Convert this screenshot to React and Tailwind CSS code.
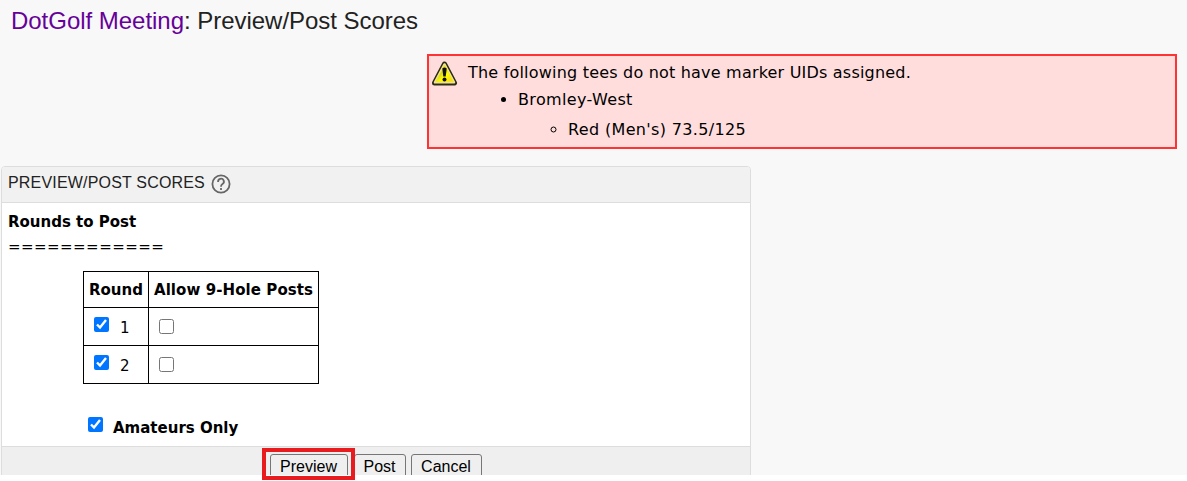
import React, { useState } from 'react';

const WarningIcon = () => (
  <svg className="block h-[26px] w-[26px] shrink-0" viewBox="0 0 26 26" fill="none">
    <defs>
      <linearGradient id="warning-fill" x1="0" y1="0" x2="1" y2="1">
        <stop offset="0" stopColor="#ffffb0" />
        <stop offset="0.4" stopColor="#d4d424" />
        <stop offset="0.6" stopColor="#ffff00" />
        <stop offset="1" stopColor="#f0d020" />
      </linearGradient>
    </defs>
    <path d="M12.5 4 L22.5 23 H2.5 Z" fill="#2c2c14" stroke="#2c2c14" strokeWidth="5" strokeLinejoin="round" />
    <path d="M12.5 4.4 L22 22.4 H3 Z" fill="#f4e4a0" stroke="#f4e4a0" strokeWidth="2.4" strokeLinejoin="round" />
    <path d="M12.5 5 L21.4 21.8 H3.6 Z" fill="url(#warning-fill)" stroke="#f0e820" strokeWidth="0.8" strokeLinejoin="round" />
    <path d="M10.3 8.6 Q12.5 6.2 14.7 8.6 L13.7 16.4 H11.3 Z" fill="#111108" />
    <circle cx="12.5" cy="19.4" r="2" fill="#111108" />
  </svg>
);

const HelpIcon = () => (
  <svg className="mt-[3px] block h-[20px] w-[20px]" viewBox="0 0 20 20" fill="none" stroke="#666" strokeWidth="1.8">
    <circle cx="10" cy="10" r="8.6" />
    <path d="M7.1 8 A2.9 2.9 0 1 1 11.5 10.1 C10.3 10.9 10 11.4 10 12.7" />
    <path d="M10 14.1 V16" />
  </svg>
);

const Checkbox = ({ checked, onChange, label, className }) => (
  <input
    type="checkbox"
    aria-label={label}
    checked={checked}
    onChange={onChange}
    className={`m-0 block h-[15px] w-[15px] shrink-0 ${className || ''}`}
  />
);

const FormButton = ({ children, className }) => (
  <button
    type="button"
    className={`h-[25px] rounded-[3px] border border-[#767676] bg-[#efefef] pr-px text-center font-['Liberation_Sans',Arial,sans-serif] text-[16px] leading-[23px] text-black ${className}`}
  >
    {children}
  </button>
);

const App = () => {
  const [rounds, setRounds] = useState([
    { number: 1, post: true, nineHole: false },
    { number: 2, post: true, nineHole: false },
  ]);
  const [amateursOnly, setAmateursOnly] = useState(true);

  const toggle = (number, field) => {
    setRounds(rounds.map((r) => (r.number === number ? { ...r, [field]: !r[field] } : r)));
  };

  return (
    <div className="relative h-[481px] w-[1187px] overflow-hidden bg-white font-['DejaVu_Sans',Verdana,sans-serif] text-black">
      <main className="flex h-[475px] flex-col overflow-hidden bg-[#f8f8f8]">
        <h1 className="h-[54px] shrink-0 pt-[6px] pl-[11px] font-['Liberation_Sans',Arial,sans-serif] text-[24px] leading-[30px] tracking-[-0.03px] text-[#222]">
          <a href="#meeting" className="text-[#609]">DotGolf Meeting</a>: Preview/Post Scores
        </h1>

        <div className="ml-[427px] flex h-[95px] w-[750px] shrink-0 border-2 border-[#f33] bg-[#fdd] pt-[4px] pl-[3px] text-[16px]">
          <WarningIcon />
          <div className="pl-[10px]">
            <p className="h-[25px] leading-[26px] tracking-[0.2px]">The following tees do not have marker UIDs assigned.</p>
            <ul className="list-disc pl-[50px] leading-[30px] tracking-[0.35px]">
              <li>
                Bromley-West
                <ul className="list-[circle] pl-[50px]">
                  <li>Red (Men's) 73.5/125</li>
                </ul>
              </li>
            </ul>
          </div>
        </div>

        <section className="mt-[17px] ml-px w-[750px] shrink-0 overflow-hidden rounded-t-[4px] border border-[#ddd] bg-white">
          <header className="flex h-[36px] gap-[6px] border-b border-[#ddd] bg-[#f1f1f1] pt-[4px] pl-[6px] font-['Liberation_Sans',Arial,sans-serif]">
            <h2 className="text-[16px] leading-[24px] tracking-[0.18px] text-[#222]">PREVIEW/POST SCORES</h2>
            <HelpIcon />
          </header>

          <form className="h-[243px] pt-[7px] pl-[6px] text-[15px]">
            <h3 className="font-bold leading-[25px]">Rounds to Post</h3>
            <p className="leading-[25px] tracking-[0.45px]">============</p>

            <table className="mt-[11px] ml-[75px] w-[236px] table-fixed border-collapse">
              <thead>
                <tr className="h-[36px]">
                  <th className="w-[65px] border border-black p-0 pt-[2px]">Round</th>
                  <th className="border border-black p-0 pt-[2px] tracking-[0.08px]">Allow 9-Hole Posts</th>
                </tr>
              </thead>
              <tbody>
                {rounds.map((r) => (
                  <tr key={r.number} className="h-[38px]">
                    <td className="border border-black p-0">
                      <div className="flex items-center gap-[11px] pl-[10px]">
                        <Checkbox label={`Round ${r.number}`} className="-mt-[4px]" checked={r.post} onChange={() => toggle(r.number, 'post')} />
                        <span className="pt-[2px] leading-[20px]">{r.number}</span>
                      </div>
                    </td>
                    <td className="border border-black p-0 pl-[10px]">
                      <Checkbox label={`Allow 9-hole posts for round ${r.number}`} checked={r.nineHole} onChange={() => toggle(r.number, 'nineHole')} />
                    </td>
                  </tr>
                ))}
              </tbody>
            </table>

            <label className="mt-[33px] ml-[80px] flex gap-[10px] font-bold leading-[22px]">
              <Checkbox checked={amateursOnly} onChange={() => setAmateursOnly(!amateursOnly)} />
              Amateurs Only
            </label>
          </form>

          <footer className="flex h-[40px] border-t border-[#ddd] bg-[#efefef] pt-[7px] pl-[268px]">
            <FormButton className="w-[78px]">Preview</FormButton>
            <FormButton className="ml-[6px] w-[52px]">Post</FormButton>
            <FormButton className="ml-[5px] w-[71px]">Cancel</FormButton>
          </footer>
        </section>
      </main>

      <div className="pointer-events-none absolute top-[448px] left-[262px] h-[32px] w-[93px] border-4 border-[#e81c1f]" />
    </div>
  );
};

export default App;
